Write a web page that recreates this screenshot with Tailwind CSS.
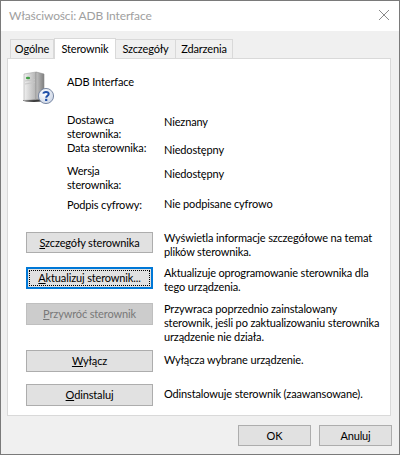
<!doctype html>
<html lang="pl">
<head>
<meta charset="utf-8">
<script src="https://cdn.jsdelivr.net/npm/@tailwindcss/browser@4"></script>
</head>
<body class="m-0 bg-white">
<div class="w-[400px] h-[455px] box-border border border-[#7a7a7a] bg-[#f0f0f0] flex flex-col overflow-hidden text-[11px] leading-[14px] tracking-[-0.14px] text-black whitespace-nowrap font-[Lato,sans-serif]">
  <div class="h-[30px] shrink-0 bg-white flex items-center justify-between pl-[8px] pr-[9px]">
    <span class="text-[12px] tracking-[-0.15px] text-[#a0a0a0]">Właściwości: ADB Interface</span>
    <svg width="12" height="12" viewBox="0 0 12 12" class="block mb-[2px]"><path d="M1 1 L11 11 M11 1 L1 11" stroke="#8a8a8a" stroke-width="1" fill="none"/></svg>
  </div>
  <div class="relative z-10 h-[27px] shrink-0 flex items-end pl-[9px]">
    <div class="w-[44px] h-[19px] box-border border border-b-0 border-[#d9d9d9] bg-[#f0f0f0] flex items-center justify-center">Ogólne</div>
    <div class="w-[62px] h-[21px] mb-[-1px] box-border border border-b-0 border-[#d9d9d9] bg-white flex items-center justify-center">Sterownik</div>
    <div class="w-[60px] h-[19px] box-border border border-b-0 border-l-0 border-[#d9d9d9] bg-[#f0f0f0] flex items-center justify-center">Szczegóły</div>
    <div class="w-[57px] h-[19px] box-border border border-b-0 border-l-0 border-[#d9d9d9] bg-[#f0f0f0] flex items-center justify-center">Zdarzenia</div>
  </div>
  <div class="ml-[6px] w-[384px] h-[358px] shrink-0 box-border border border-[#d9d9d9] bg-white flex flex-col pl-[18px]">
    <div class="flex h-[32px] mt-[13px] shrink-0">
      <svg width="34" height="34" viewBox="0 0 34 34" class="block shrink-0 ml-[-4px] mt-[-1px]">
        <defs>
          <linearGradient id="f" x1="0" x2="1" y1="0" y2="0"><stop offset="0" stop-color="#f0f0f0"/><stop offset="1" stop-color="#b4b4b4"/></linearGradient>
          <linearGradient id="s" x1="0" x2="1" y1="0" y2="0"><stop offset="0" stop-color="#c4c4c4"/><stop offset="1" stop-color="#7f7f7f"/></linearGradient>
          <radialGradient id="q" cx="0.4" cy="0.35" r="0.7"><stop offset="0" stop-color="#ffffff"/><stop offset="1" stop-color="#c9d3e4"/></radialGradient>
        </defs>
        <ellipse cx="12" cy="29.5" rx="11" ry="1.4" fill="#3a3a3a"/>
        <path d="M2 3 L14 1 L14 28.5 L2 29.5 Z" fill="url(#f)" stroke="#a4a4a4" stroke-width="0.6"/>
        <path d="M14 1 L22 3 L22 27.5 L14 28.5 Z" fill="url(#s)" stroke="#8a8a8a" stroke-width="0.6"/>
        <path d="M3 10 L13 8.5 M3 13 L13 11.5" stroke="#c6c6c6" stroke-width="1"/>
        <ellipse cx="6" cy="7" rx="2.2" ry="1.2" fill="#43a047"/>
        <circle cx="24" cy="25" r="7.6" fill="url(#q)" stroke="#6f7f9c" stroke-width="0.9"/>
        <path d="M21.3 22.6 C21.6 20.4 26.6 20.2 26.7 22.9 C26.8 24.7 24.3 24.8 24.2 26.7" stroke="#1f4fa8" stroke-width="2" fill="none"/>
        <rect x="23.1" y="27.8" width="2.2" height="2.2" fill="#1f4fa8"/>
      </svg>
      <div class="ml-[11px] mt-[3px]">ADB Interface</div>
    </div>
    <div class="mt-[9px] ml-[41px] flex flex-col shrink-0">
      <div class="flex h-[28px]"><div class="w-[97px]">Dostawca<br>sterownika:</div><div class="pt-[2px]">Nieznany</div></div>
      <div class="flex h-[23px]"><div class="w-[97px]">Data sterownika:</div><div class="pt-[2px]">Niedostępny</div></div>
      <div class="flex h-[33px]"><div class="w-[97px]">Wersja<br>sterownika:</div><div class="pt-[3px]">Niedostępny</div></div>
      <div class="flex h-[15px]"><div class="w-[97px] pt-[1px]">Podpis cyfrowy:</div><div>Nie podpisane cyfrowo</div></div>
    </div>
    <div class="mt-[20px] flex h-[35px] shrink-0">
      <div class="w-[127px] h-[21px] shrink-0 box-border border border-[#adadad] bg-[#e1e1e1] flex items-center justify-center"><span><u>S</u>zczegóły sterownika</span></div>
      <div class="ml-[11px] mt-[-1px]">Wyświetla informacje szczegółowe na temat<br>plików sterownika.</div>
    </div>
    <div class="flex h-[36px] shrink-0">
      <div class="w-[127px] h-[22px] shrink-0 box-border border-2 border-[#0078d7] bg-[#e1e1e1] flex items-center justify-center p-[1px]"><span class="w-full h-full box-border border border-dotted border-black flex items-center justify-center"><span><u>A</u>ktualizuj sterownik...</span></span></div>
      <div class="ml-[11px] mt-[-1px]">Aktualizuje oprogramowanie sterownika dla<br>tego urządzenia.</div>
    </div>
    <div class="flex h-[47px] shrink-0">
      <div class="w-[127px] h-[22px] shrink-0 box-border border border-[#bfbfbf] bg-[#cccccc] text-[#787878] flex items-center justify-center"><span><u>P</u>rzywróć sterownik</span></div>
      <div class="ml-[11px] mt-[-1px]">Przywraca poprzednio zainstalowany<br>sterownik, jeśli po zaktualizowaniu sterownika<br>urządzenie nie działa.</div>
    </div>
    <div class="flex h-[34px] shrink-0">
      <div class="w-[127px] h-[22px] shrink-0 box-border border border-[#adadad] bg-[#e1e1e1] flex items-center justify-center"><span><u>W</u>yłącz</span></div>
      <div class="ml-[11px] mt-[3px]">Wyłącza wybrane urządzenie.</div>
    </div>
    <div class="flex h-[22px] shrink-0">
      <div class="w-[127px] h-[22px] shrink-0 box-border border border-[#adadad] bg-[#e1e1e1] flex items-center justify-center"><span><u>O</u>dinstaluj</span></div>
      <div class="ml-[11px] mt-[3px]">Odinstalowuje sterownik (zaawansowane).</div>
    </div>
  </div>
  <div class="flex justify-end gap-[8px] mt-[9px] pr-[7px]">
    <div class="w-[73px] h-[21px] box-border border border-[#adadad] bg-[#e1e1e1] flex items-center justify-center">OK</div>
    <div class="w-[73px] h-[21px] box-border border border-[#adadad] bg-[#e1e1e1] flex items-center justify-center">Anuluj</div>
  </div>
</div>
</body>
</html>
